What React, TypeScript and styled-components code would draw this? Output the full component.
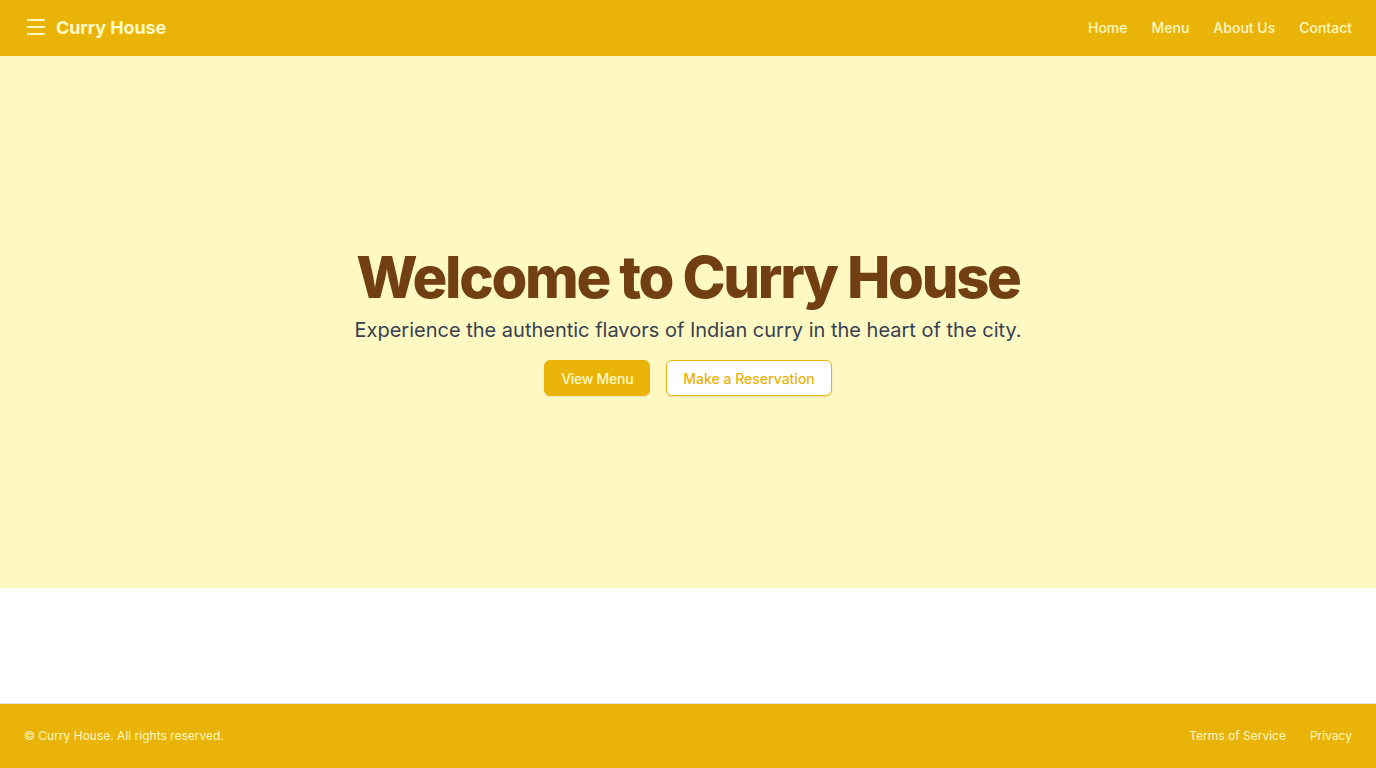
import React from "react";
import styled, { createGlobalStyle } from "styled-components";
import { Menu as MenuIcon } from "lucide-react";

const GlobalStyle = createGlobalStyle`
  * { box-sizing: border-box; }
  html, body { margin: 0; padding: 0; }
  body {
    font-family: Inter, "Noto Sans", "Liberation Sans", sans-serif;
    background: #ffffff;
    -webkit-font-smoothing: antialiased;
  }
`;

const Page = styled.div`
  display: flex;
  flex-direction: column;
  min-height: 768px;
`;

const Header = styled.header`
  height: 56px;
  background: #eab308;
  display: flex;
  align-items: center;
  justify-content: space-between;
  padding: 0 24px 2px;
  color: #fef9c3;
`;

const Brand = styled.div`
  display: flex;
  align-items: center;
  gap: 8px;
`;

const IconButton = styled.button`
  background: none;
  border: none;
  padding: 0;
  display: flex;
  color: #fef9c3;
  cursor: pointer;
`;

const BrandName = styled.span`
  font-size: 18px;
  font-weight: 700;
  letter-spacing: -0.005em;
  color: #fef9c3;
`;

const Nav = styled.nav`
  display: flex;
  gap: 24px;
`;

const NavLink = styled.a`
  font-size: 14px;
  font-weight: 500;
  color: #fef9c3;
  text-decoration: none;
`;

const Hero = styled.section`
  height: 532px;
  background: #fef9c3;
  display: flex;
  flex-direction: column;
  align-items: center;
  justify-content: center;
  text-align: center;
`;

const Title = styled.h1`
  margin: 0;
  font-size: 58px;
  line-height: 1;
  font-weight: 800;
  letter-spacing: -0.04em;
  color: #713f12;
`;

const Subtitle = styled.p`
  margin: 10px 0 0;
  font-size: 20px;
  line-height: 28px;
  color: #374151;
`;

const Actions = styled.div`
  display: flex;
  gap: 16px;
  margin-top: 16px;
`;

const Button = styled.a<{ $variant: "solid" | "outline" }>`
  display: inline-flex;
  align-items: center;
  justify-content: center;
  height: 36px;
  padding: 0 16px;
  border-radius: 6px;
  font-size: 14px;
  font-weight: 500;
  text-decoration: none;
  box-shadow: 0 1px 2px rgba(0, 0, 0, 0.1);
  border: 1px solid #eab308;
  background: ${(p) => (p.$variant === "solid" ? "#eab308" : "#ffffff")};
  color: ${(p) => (p.$variant === "solid" ? "#fef9c3" : "#eab308")};
  letter-spacing: ${(p) => (p.$variant === "solid" ? "-0.02em" : "0")};
`;

const Spacer = styled.div`
  flex: 1;
  background: #ffffff;
`;

const Footer = styled.footer`
  height: 65px;
  background: #eab308;
  border-top: 1px solid #e5e7eb;
  display: flex;
  align-items: center;
  justify-content: space-between;
  padding: 0 24px 2px;
  color: #fef9c3;
`;

const FooterText = styled.p`
  margin: 0;
  font-size: 12px;
`;

const FooterNav = styled.nav`
  display: flex;
  gap: 24px;
`;

const FooterLink = styled.a`
  font-size: 12px;
  color: #fef9c3;
  text-decoration: none;
`;

export default function App() {
  return (
    <Page>
      <GlobalStyle />
      <Header>
        <Brand>
          <IconButton aria-label="Menu">
            <MenuIcon size={24} strokeWidth={2} />
          </IconButton>
          <BrandName>Curry House</BrandName>
        </Brand>
        <Nav>
          <NavLink href="#">Home</NavLink>
          <NavLink href="#">Menu</NavLink>
          <NavLink href="#">About Us</NavLink>
          <NavLink href="#">Contact</NavLink>
        </Nav>
      </Header>
      <Hero>
        <Title>Welcome to Curry House</Title>
        <Subtitle>Experience the authentic flavors of Indian curry in the heart of the city.</Subtitle>
        <Actions>
          <Button $variant="solid" href="#">View Menu</Button>
          <Button $variant="outline" href="#">Make a Reservation</Button>
        </Actions>
      </Hero>
      <Spacer />
      <Footer>
        <FooterText>© Curry House. All rights reserved.</FooterText>
        <FooterNav>
          <FooterLink href="#">Terms of Service</FooterLink>
          <FooterLink href="#">Privacy</FooterLink>
        </FooterNav>
      </Footer>
    </Page>
  );
}
